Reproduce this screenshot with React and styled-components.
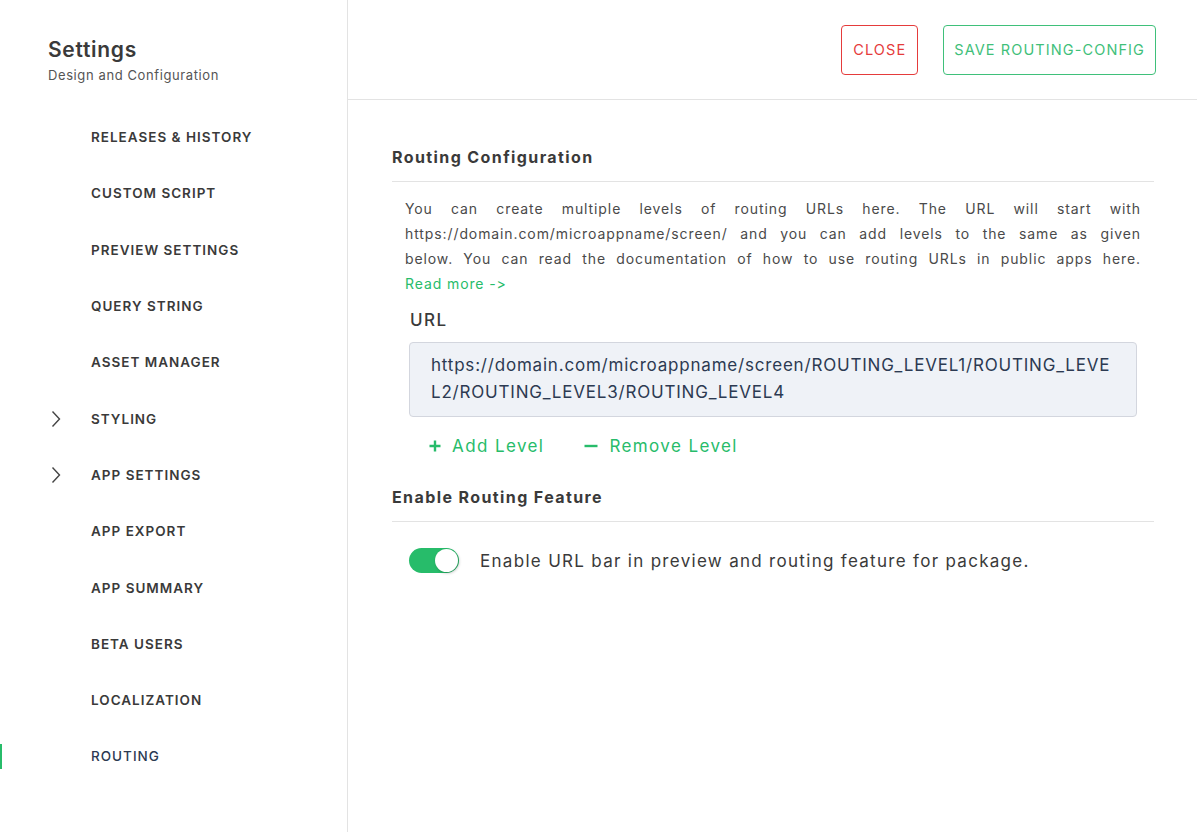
import React from 'react';
import styled, { createGlobalStyle } from 'styled-components';

const Global = createGlobalStyle`
  html, body { margin: 0; padding: 0; background: #fff; }
  body { font-family: Inter, "Open Sans", sans-serif; color: #3a3a3a; }
  * { box-sizing: border-box; }
`;

const Shell = styled.div`
  display: flex;
  width: 1197px;
  height: 832px;
  overflow: hidden;
`;

const Sidebar = styled.aside`
  width: 348px;
  flex-shrink: 0;
  border-right: 1px solid #e3e3e3;
  display: flex;
  flex-direction: column;
`;

const Brand = styled.div`
  padding: 37px 0 0 48px;
  height: 109px;
`;

const Title = styled.h1`
  margin: 0;
  font-size: 21px;
  font-weight: 600;
  letter-spacing: 0.7px;
  color: #3a3a3a;
  line-height: 26px;
`;

const Subtitle = styled.div`
  font-size: 13px;
  letter-spacing: 0.6px;
  color: #555;
  margin-top: 4px;
`;

const Menu = styled.ul`
  list-style: none;
  margin: 0;
  padding: 0;
`;

const MenuItem = styled.li`
  position: relative;
  height: 56.3px;
  display: flex;
  align-items: center;
  padding-left: 91px;
  font-size: 13.5px;
  letter-spacing: 1px;
  color: ${p => (p.$active ? '#2c3a52' : '#3a3a3a')};
  font-weight: ${p => (p.$active ? 500 : 600)};

  &::before {
    content: '';
    display: ${p => (p.$active ? 'block' : 'none')};
    position: absolute;
    left: 0;
    top: 16px;
    width: 2px;
    height: 25px;
    background: #27bc6a;
  }
`;

const Chevron = styled.svg`
  position: absolute;
  left: 51px;
  top: 50%;
  transform: translateY(-50%);
`;

const Main = styled.main`
  flex: 1;
  display: flex;
  flex-direction: column;
`;

const Header = styled.header`
  height: 100px;
  border-bottom: 1px solid #e3e3e3;
  display: flex;
  align-items: center;
  justify-content: flex-end;
  gap: 25px;
  padding: 0 41px 0 0;
`;

const OutlineButton = styled.button`
  height: 50px;
  padding: 0 ${p => p.$pad}px;
  background: #fff;
  border: 1px solid ${p => p.$color};
  color: ${p => p.$color};
  border-radius: 4px;
  font-family: inherit;
  font-size: 14.5px;
  letter-spacing: 1.1px;
  cursor: pointer;
`;

const Content = styled.div`
  padding: 47px 43px 0 44px;
`;

const SectionTitle = styled.h2`
  margin: 0;
  font-size: 16px;
  font-weight: 700;
  letter-spacing: 1.4px;
  color: #3a3a3a;
  padding-bottom: 14px;
  border-bottom: 1px solid #e3e3e3;
`;

const Para = styled.div`
  margin: 14px 13px 0 13px;
  font-size: 14px;
  line-height: 25px;
  letter-spacing: 0.9px;
  color: #4a4a4a;
`;

const ParaLine = styled.span`
  display: block;
  white-space: nowrap;
  text-align: justify;
  text-align-last: ${p => (p.$last ? 'left' : 'justify')};
`;

const Link = styled.a`
  color: #27bc6a;
  text-decoration: none;
`;

const FieldLabel = styled.div`
  margin: 14px 0 0 18px;
  font-size: 17px;
  font-weight: 500;
  letter-spacing: 1.5px;
  color: #3a3a3a;
`;

const UrlBox = styled.div`
  margin: 12px 17px 0 17px;
  background: #eff2f7;
  border: 1px solid #d3d6de;
  border-radius: 4px;
  padding: 9px 16px 10px 21px;
  font-size: 17px;
  line-height: 27px;
  letter-spacing: 0.8px;
  color: #2c3a52;
  word-break: break-all;
`;

const Actions = styled.div`
  display: flex;
  gap: 40px;
  margin: 19px 0 0 37px;
`;

const Action = styled.button`
  display: flex;
  align-items: center;
  gap: 11px;
  background: none;
  border: none;
  padding: 0;
  font-family: inherit;
  font-size: 17px;
  color: #27bc6a;
  letter-spacing: 1.4px;
  cursor: pointer;
`;

const Section2 = styled.div`
  margin-top: 31px;
`;

const ToggleRow = styled.div`
  display: flex;
  align-items: center;
  gap: 21px;
  margin: 26px 0 0 17px;
  font-size: 17px;
  letter-spacing: 1.3px;
  color: #3a3a3a;
`;

const Toggle = styled.div`
  width: 50px;
  height: 25px;
  border-radius: 13px;
  background: #27bc6a;
  position: relative;
  flex-shrink: 0;

  &::after {
    content: '';
    position: absolute;
    right: 1px;
    top: 1px;
    width: 23px;
    height: 23px;
    border-radius: 50%;
    background: #fff;
    box-shadow: 1px 1px 3px rgba(0, 0, 0, 0.25);
  }
`;

const items = [
  'RELEASES & HISTORY',
  'CUSTOM SCRIPT',
  'PREVIEW SETTINGS',
  'QUERY STRING',
  'ASSET MANAGER',
  'STYLING',
  'APP SETTINGS',
  'APP EXPORT',
  'APP SUMMARY',
  'BETA USERS',
  'LOCALIZATION',
  'ROUTING',
];
const expandable = ['STYLING', 'APP SETTINGS'];

const ChevronIcon = () => (
  <Chevron width="10" height="18" viewBox="0 0 10 18" fill="none">
    <path d="M1.5 1.5 L8.5 9 L1.5 16.5" stroke="#444" strokeWidth="1.4" />
  </Chevron>
);

export default function App() {
  return (
    <>
      <Global />
      <Shell>
        <Sidebar>
          <Brand>
            <Title>Settings</Title>
            <Subtitle>Design and Configuration</Subtitle>
          </Brand>
          <Menu>
            {items.map(it => (
              <MenuItem key={it} $active={it === 'ROUTING'}>
                {expandable.includes(it) && <ChevronIcon />}
                {it}
              </MenuItem>
            ))}
          </Menu>
        </Sidebar>
        <Main>
          <Header>
            <OutlineButton $color="#e53b3b" $pad={11}>CLOSE</OutlineButton>
            <OutlineButton $color="#3fc07a" $pad={10}>SAVE ROUTING-CONFIG</OutlineButton>
          </Header>
          <Content>
            <SectionTitle>Routing Configuration</SectionTitle>
            <Para>
              <ParaLine>You can create multiple levels of routing URLs here. The URL will start with</ParaLine>
              <ParaLine>https://domain.com/microappname/screen/ and you can add levels to the same as given</ParaLine>
              <ParaLine>below. You can read the documentation of how to use routing URLs in public apps here.</ParaLine>
              <ParaLine $last>
                <Link href="#">Read more -&gt;</Link>
              </ParaLine>
            </Para>
            <FieldLabel>URL</FieldLabel>
            <UrlBox>
              https://domain.com/microappname/screen/ROUTING_LEVEL1/ROUTING_LEVEL2/ROUTING_LEVEL3/ROUTING_LEVEL4
            </UrlBox>
            <Actions>
              <Action>
                <svg width="12" height="12" viewBox="0 0 12 12">
                  <path d="M6 0.5 V11.5 M0.5 6 H11.5" stroke="#27bc6a" strokeWidth="2.4" />
                </svg>
                Add Level
              </Action>
              <Action>
                <svg width="14" height="12" viewBox="0 0 14 12">
                  <path d="M0.5 6 H13.5" stroke="#27bc6a" strokeWidth="2.4" />
                </svg>
                Remove Level
              </Action>
            </Actions>
            <Section2>
              <SectionTitle>Enable Routing Feature</SectionTitle>
              <ToggleRow>
                <Toggle />
                Enable URL bar in preview and routing feature for package.
              </ToggleRow>
            </Section2>
          </Content>
        </Main>
      </Shell>
    </>
  );
}
